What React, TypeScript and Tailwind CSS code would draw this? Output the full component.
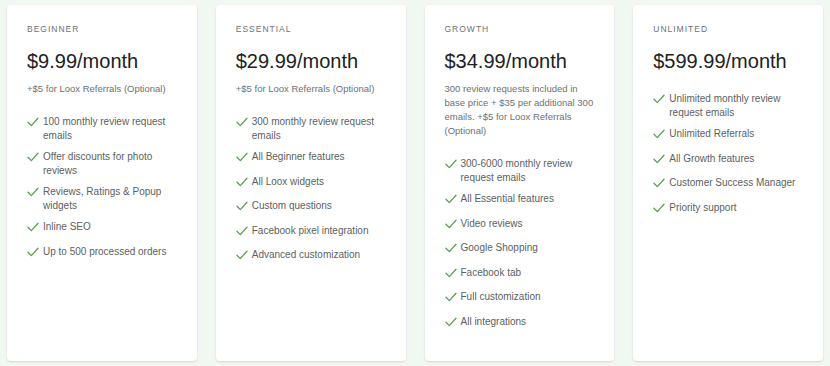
type Plan = {
  name: string
  price: string
  note?: string[]
  features: string[][]
}

const plans: Plan[] = [
  {
    name: 'BEGINNER',
    price: '$9.99/month',
    note: ['+$5 for Loox Referrals (Optional)'],
    features: [
      ['100 monthly review request', 'emails'],
      ['Offer discounts for photo', 'reviews'],
      ['Reviews, Ratings & Popup', 'widgets'],
      ['Inline SEO'],
      ['Up to 500 processed orders'],
    ],
  },
  {
    name: 'ESSENTIAL',
    price: '$29.99/month',
    note: ['+$5 for Loox Referrals (Optional)'],
    features: [
      ['300 monthly review request', 'emails'],
      ['All Beginner features'],
      ['All Loox widgets'],
      ['Custom questions'],
      ['Facebook pixel integration'],
      ['Advanced customization'],
    ],
  },
  {
    name: 'GROWTH',
    price: '$34.99/month',
    note: [
      '300 review requests included in',
      'base price + $35 per additional 300',
      'emails. +$5 for Loox Referrals',
      '(Optional)',
    ],
    features: [
      ['300-6000 monthly review', 'request emails'],
      ['All Essential features'],
      ['Video reviews'],
      ['Google Shopping'],
      ['Facebook tab'],
      ['Full customization'],
      ['All integrations'],
    ],
  },
  {
    name: 'UNLIMITED',
    price: '$599.99/month',
    features: [
      ['Unlimited monthly review', 'request emails'],
      ['Unlimited Referrals'],
      ['All Growth features'],
      ['Customer Success Manager'],
      ['Priority support'],
    ],
  },
]

function Check() {
  return (
    <svg width="12" height="10" viewBox="0 0 12 10" fill="none" className="shrink-0">
      <path d="M1 5.2 L4.3 8.6 L11 1.2" stroke="#5b9f52" strokeWidth="1.3" strokeLinecap="round" strokeLinejoin="round" />
    </svg>
  )
}

function PlanCard({ plan }: { plan: Plan }) {
  return (
    <div className="flex-1 rounded-[4px] bg-white pt-[17px] pl-[20px] pr-[12px] shadow-[0_1px_2px_rgba(60,90,60,0.18)]">
      <div className="text-[8.5px] leading-[14px] tracking-[1px] text-[#6d7175]">{plan.name}</div>
      <div className="mt-[13px] text-[20px] leading-[24px] text-[#202223]">{plan.price}</div>
      {plan.note && (
        <div className="mt-[9px] mb-[2px] text-[9.5px] leading-[14px] text-[#6d7175]">
          {plan.note.map((line) => (
            <div key={line}>{line}</div>
          ))}
        </div>
      )}
      <ul className="mt-[19px] flex flex-col gap-[7px]">
        {plan.features.map((lines) => (
          <li key={lines[0]} className="flex items-start gap-[6px]">
            <div className="flex h-[17.5px] w-[10px] items-start pt-[2px]">
              <Check />
            </div>
            <div className="text-[10px] leading-[14px] text-[#5c5f62]">
              {lines.map((l) => (
                <div key={l}>{l}</div>
              ))}
            </div>
          </li>
        ))}
      </ul>
    </div>
  )
}

export default function App() {
  return (
    <div
      className="flex h-[366px] w-[830px] gap-[19px] bg-[#f1f8f1] px-[7px] pt-[5px] pb-[5px]"
      style={{ fontFamily: '"Liberation Sans", Arial, sans-serif' }}
    >
      {plans.map((plan) => (
        <PlanCard key={plan.name} plan={plan} />
      ))}
    </div>
  )
}
